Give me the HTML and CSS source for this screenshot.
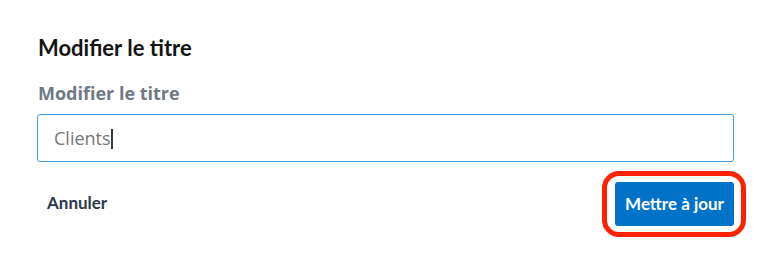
FILE: index.html
```html
<!DOCTYPE html>
<html lang="fr">
<head>
<meta charset="utf-8">
<link rel="stylesheet" href="styles.css">
</head>
<body>
<div class="dialog">
  <h2 class="title">Modifier le titre</h2>
  <label class="label" for="t">Modifier le titre</label>
  <div class="field"><span class="value">Clients</span><span class="caret"></span></div>
  <div class="actions">
    <button class="btn-cancel">Annuler</button>
    <button class="btn-primary">Mettre à jour</button>
  </div>
</div>
</body>
</html>
```
FILE: styles.css
```css
html, body { margin: 0; padding: 0; background: #fff; }
body { width: 766px; height: 264px; overflow: hidden; }
.dialog {
  padding: 35px 32px 0 37px;
  display: flex;
  flex-direction: column;
  font-family: Lato, "Open Sans", sans-serif;
}
.title {
  margin: 0;
  font-size: 22px;
  font-weight: 700;
  color: #141414;
  line-height: 26px;
  padding-left: 1px;
}
.label {
  margin-top: 22px;
  font-family: "Open Sans", sans-serif;
  font-weight: 700;
  font-size: 18px;
  color: #6f7985;
  line-height: 20px;
  padding-left: 1px;
}
.field {
  margin-top: 11px;
  height: 46px;
  border: 1px solid #3d9be9;
  border-radius: 3px;
  display: flex;
  align-items: center;
  padding-left: 16px;
}
.value {
  font-family: "Open Sans", sans-serif;
  font-size: 18px;
  color: #777;
}
.caret {
  width: 2px;
  height: 20px;
  background: #3a3a3a;
  margin-top: 2px;
}
.actions {
  margin-top: 20px;
  display: flex;
  justify-content: space-between;
  align-items: center;
}
.btn-cancel {
  border: 0;
  background: transparent;
  font-family: Lato, sans-serif;
  font-weight: 700;
  font-size: 17px;
  color: #2d3748;
  padding: 10px 10px 13px;
  cursor: pointer;
}
.btn-primary {
  position: relative;
  border: 0;
  border-radius: 3px;
  background: #0073c8;
  color: #fff;
  font-family: Lato, sans-serif;
  font-weight: 700;
  font-size: 17px;
  width: 119px;
  height: 44px;
  padding: 0 0 1px;
}
.btn-primary::after {
  content: "";
  position: absolute;
  left: -13px;
  right: -12px;
  top: -11px;
  bottom: -11px;
  border: 5px solid #ff2200;
  border-radius: 17px;
  pointer-events: none;
}
```
